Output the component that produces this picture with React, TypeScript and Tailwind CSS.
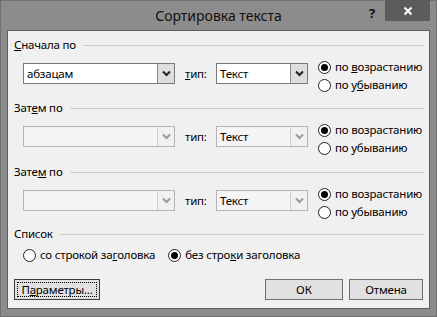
import React from "react";

const font = { fontFamily: '"Noto Sans", "Open Sans", sans-serif' };

const Chevron = ({ color }: { color: string }) => (
  <svg width="9" height="7" viewBox="0 0 9 7">
    <path d="M1 1.5 L4.5 5 L8 1.5" fill="none" stroke={color} strokeWidth="2" />
  </svg>
);

const Combo = ({
  width,
  value,
  enabled,
  white,
}: {
  width: string;
  value?: string;
  enabled?: boolean;
  white?: boolean;
}) => (
  <div
    className={`flex h-[21px] ${width} border ${
      enabled ? "border-[#7a7a7a]" : "border-[#b4b4b4]"
    } ${white ? "bg-white" : "bg-[#f4f4f4]"}`}
  >
    <div className="flex-1 pl-[3px] text-[11.5px] leading-[19px] tracking-[-0.2px] text-black">{value}</div>
    <div
      className={`flex w-[17px] items-center justify-center border-l ${
        enabled ? "border-[#8a8a8a] bg-[#dedede]" : "border-[#cfcfcf] bg-[#f0f0f0]"
      }`}
    >
      <Chevron color={enabled ? "#222" : "#9a9a9a"} />
    </div>
  </div>
);

const Radio = ({
  checked,
  enabled = true,
  children,
}: {
  checked?: boolean;
  enabled?: boolean;
  children: React.ReactNode;
}) => (
  <div className="flex h-[18px] items-center">
    <div
      className={`flex h-[13px] w-[13px] items-center justify-center rounded-full border-[1.5px] ${
        enabled ? "border-[#222] bg-white" : "border-[#b8b8b8] bg-[#e8e8e8]"
      }`}
    >
      {checked && (
        <div className={`h-[7px] w-[7px] rounded-full ${enabled ? "bg-black" : "bg-[#555]"}`} />
      )}
    </div>
    <span className="ml-[4px] text-[11.5px] tracking-[-0.2px] text-black">{children}</span>
  </div>
);

const GroupLabel = ({ children, className = "" }: { children: React.ReactNode; className?: string }) => (
  <div className={`flex h-4 items-center pr-[5px] ${className}`}>
    <span className="text-[11.5px] leading-4 tracking-[-0.2px] text-black">{children}</span>
    <div className="ml-[7px] h-px flex-1 bg-[#cdcdcd]" />
  </div>
);

const SortRow = ({
  value,
  enabled,
  className = "",
}: {
  value: string;
  enabled?: boolean;
  className?: string;
}) => (
  <div className={`flex items-start pl-[15px] ${className}`}>
    <div className="mt-[5px] flex items-center">
      <Combo width="w-[152px]" value={value} enabled={enabled} white={enabled} />
      <span className="ml-[10px] w-[31px] text-[11.5px] tracking-[-0.2px] text-black">
        {enabled ? (
          <>
            <u>т</u>ип:
          </>
        ) : (
          "тип:"
        )}
      </span>
      <Combo width="w-[92px]" value="Текст" enabled={enabled} white={enabled} />
    </div>
    <div className="ml-[10px] flex flex-col">
      <Radio checked enabled={enabled}>
        {enabled ? (
          <>
            по <u>в</u>озрастанию
          </>
        ) : (
          "по возрастанию"
        )}
      </Radio>
      <Radio enabled={enabled}>
        {enabled ? (
          <>
            по у<u>б</u>ыванию
          </>
        ) : (
          "по убыванию"
        )}
      </Radio>
    </div>
  </div>
);

export default function App() {
  return (
    <div style={font} className="flex h-[317px] w-[437px] flex-col border border-[#707070] bg-[#8c8c8c]">
      {/* title bar */}
      <div className="relative flex h-[29px] items-center justify-center">
        <span className="text-[14px] text-[#111]">Сортировка текста</span>
        <span className="absolute left-[368px] top-[3px] text-[13px] font-bold text-[#111]">?</span>
        <div className="absolute left-[384px] top-[-1px] flex h-[21px] w-[45px] items-center justify-center bg-[#5c5c5c]">
          <svg width="10" height="10" viewBox="0 0 10 10">
            <path d="M1.5 1.5 L8.5 8.5 M8.5 1.5 L1.5 8.5" stroke="#fff" strokeWidth="2" />
          </svg>
        </div>
      </div>

      {/* client area */}
      <div className="mx-[6px] mb-[7px] flex flex-1 flex-col border border-[#5e5e5e] bg-[#f0f0f0] pl-[6px]">
        <GroupLabel className="mt-[6px]">
          <u>С</u>начала по
        </GroupLabel>
        <SortRow value="абзацам" enabled className="mt-[5px] -ml-[6px]" />

        <GroupLabel className="mt-[6px]">
          Зат<u>е</u>м по
        </GroupLabel>
        <SortRow value="" className="mt-[5px] -ml-[6px]" />

        <GroupLabel className="mt-[7px]">
          Зате<u>м</u> по
        </GroupLabel>
        <SortRow value="" className="mt-[5px] -ml-[6px]" />

        <GroupLabel className="mt-[5px]">Список</GroupLabel>
        <div className="mt-[4px] flex items-center pl-[9px]">
          <Radio>
            со строкой за<u>г</u>оловка
          </Radio>
          <div className="ml-[13px]">
            <Radio checked>
              без стро<u>к</u>и заголовка
            </Radio>
          </div>
        </div>

        <div className="mt-[15px] flex items-center pr-[6px]">
          <button className="flex h-[21px] w-[86px] items-center justify-center border border-[#3c3c3c] bg-[#e1e1e1] p-[2px]">
            <span className="flex h-full w-full items-center justify-center border border-dotted border-black text-[11.5px] tracking-[-0.2px] text-black">
              П<u>а</u>раметры...
            </span>
          </button>
          <div className="flex-1" />
          <button className="h-[21px] w-[78px] border border-[#707070] bg-[#e1e1e1] text-[11.5px] text-black">
            ОК
          </button>
          <button className="ml-[6px] h-[21px] w-[74px] border border-[#707070] bg-[#e1e1e1] text-[11.5px] tracking-[-0.2px] text-black">
            Отмена
          </button>
        </div>
      </div>
    </div>
  );
}
